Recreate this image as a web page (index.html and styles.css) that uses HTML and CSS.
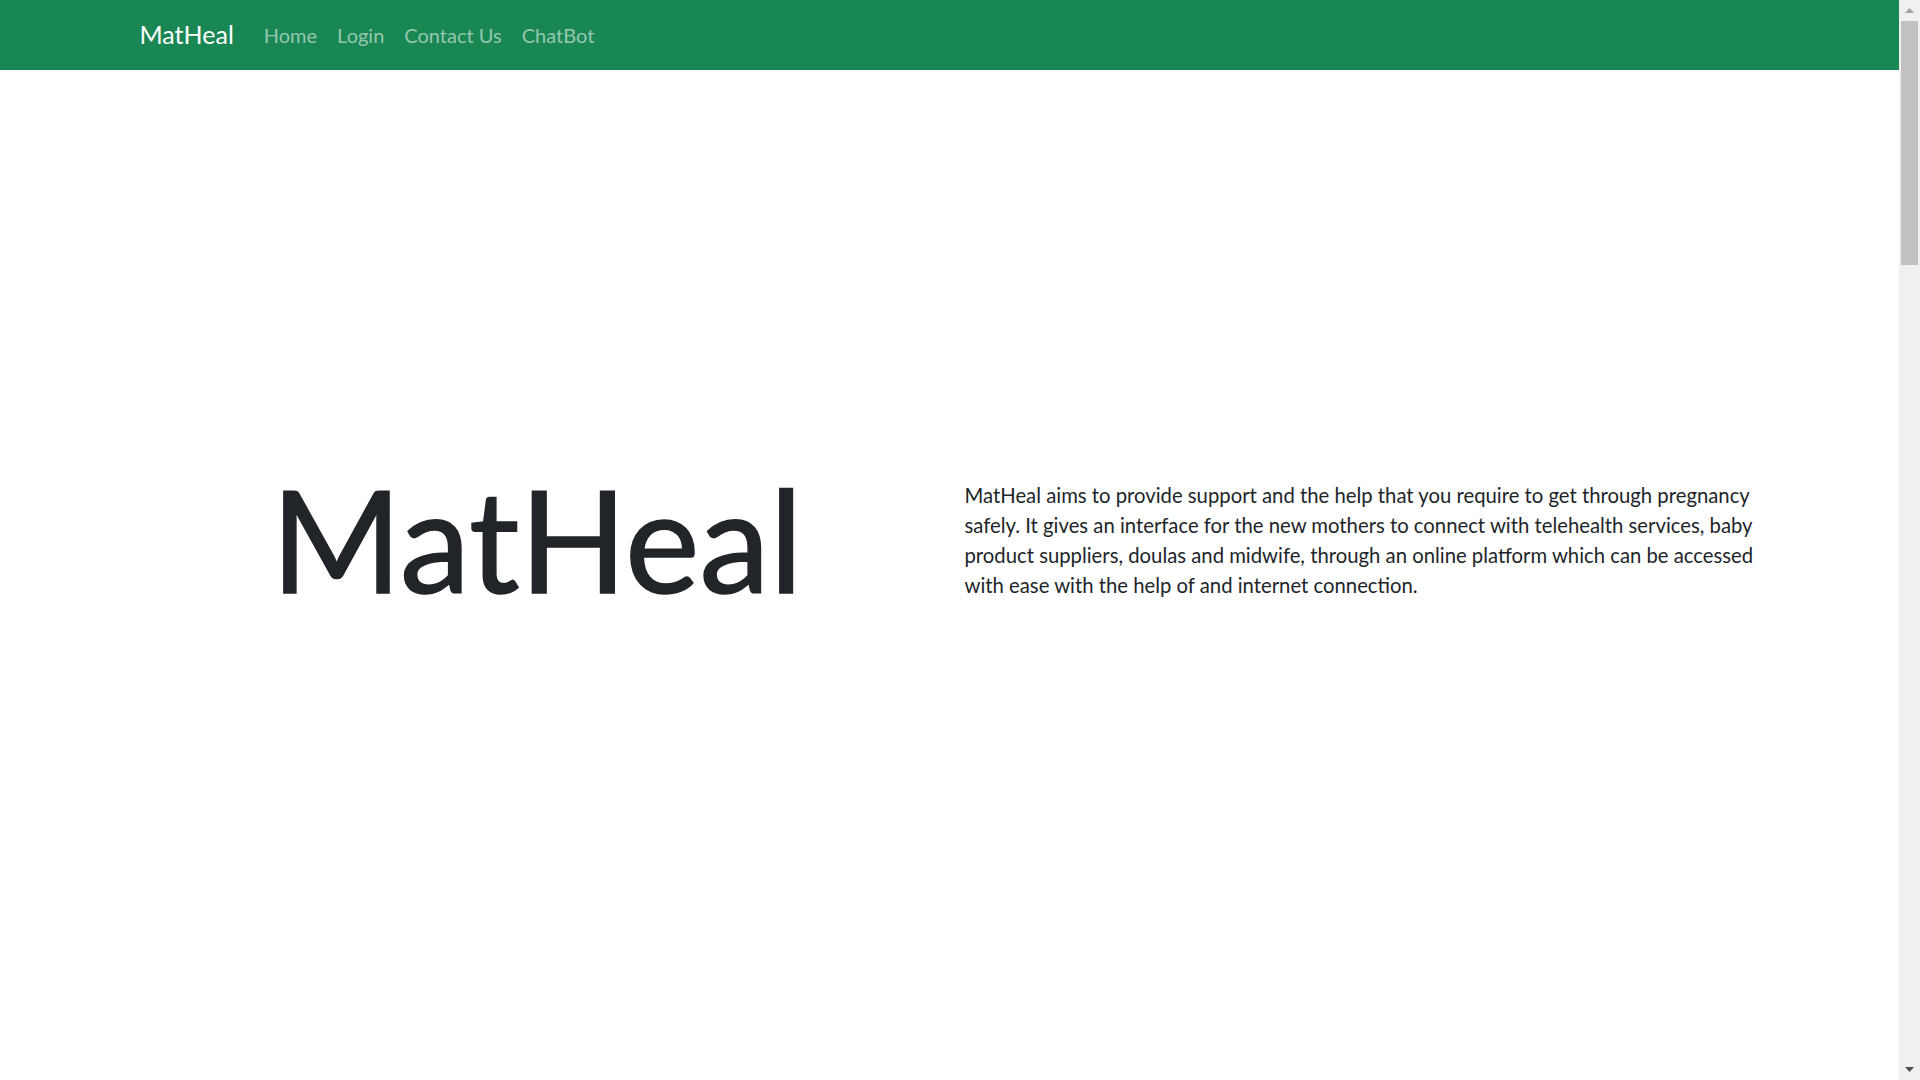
FILE: index.html
```html
<!DOCTYPE html>
<html lang="en">
<head>
<meta charset="utf-8">
<title>MatHeal</title>
<link rel="stylesheet" href="styles.css">
</head>
<body>
<div class="viewport">
  <div class="page">
    <nav class="navbar">
      <div class="container nav-inner">
        <a class="brand" href="#">MatHeal</a>
        <ul class="nav">
          <li><a class="nav-link" href="#">Home</a></li>
          <li><a class="nav-link" href="#">Login</a></li>
          <li><a class="nav-link" href="#">Contact Us</a></li>
          <li><a class="nav-link" href="#">ChatBot</a></li>
        </ul>
      </div>
    </nav>
    <main class="hero">
      <div class="container row">
        <div class="col col-title">
          <h1 class="display">MatHeal</h1>
        </div>
        <div class="col col-text">
          <p class="lead">MatHeal aims to provide support and the help that you require to get through pregnancy safely. It gives an interface for the new mothers to connect with telehealth services, baby product suppliers, doulas and midwife, through an online platform which can be accessed with ease with the help of and internet connection.</p>
        </div>
      </div>
    </main>
  </div>
  <div class="scrollbar" aria-hidden="true">
    <div class="sb-btn">
      <svg width="9" height="5" viewBox="0 0 9 5"><polygon points="0,5 4.5,0 9,5" fill="#a3a3a3"/></svg>
    </div>
    <div class="sb-track">
      <div class="sb-thumb"></div>
    </div>
    <div class="sb-btn">
      <svg width="9" height="5" viewBox="0 0 9 5"><polygon points="0,0 9,0 4.5,5" fill="#505050"/></svg>
    </div>
  </div>
</div>
</body>
</html>
```
FILE: styles.css
```css
* { box-sizing: border-box; }
html, body { margin: 0; padding: 0; height: 100%; overflow: hidden; }
body {
  font-family: "Lato", "Noto Sans", "Liberation Sans", sans-serif;
  font-size: 20px;
  line-height: 1.5;
  color: #212529;
  background: #fff;
}
.viewport { display: flex; height: 100vh; }
.page { flex: 1; min-width: 0; overflow: hidden; }

.container { width: 1650px; margin: 0 auto; padding: 0 15px; }

.navbar { background: #198754; padding: 10px 0; }
.nav-inner { display: flex; align-items: center; }
.brand {
  font-size: 25px;
  line-height: 37.5px;
  padding: 6.25px 0;
  margin-right: 20px;
  color: #fff;
  text-decoration: none;
  white-space: nowrap;
}
.nav { display: flex; list-style: none; margin: 0; padding: 0; }
.nav-link {
  display: block;
  padding: 10px;
  line-height: 30px;
  font-size: 20px;
  color: rgba(255, 255, 255, 0.55);
  text-decoration: none;
}

.hero { padding-top: 384px; }
.row { display: flex; padding: 0; }
.col { flex: 1 1 0; padding: 0 15px; }
.col-title { text-align: center; }
.display {
  margin: 0 0 10px;
  font-size: 141px;
  font-weight: 400;
  line-height: 1.2;
  letter-spacing: 0;
  -webkit-text-stroke: 1.5px #212529;
}
.col-text { padding-top: 26px; }
.lead {
  margin: 0 0 20px;
  font-size: 20.3px;
  line-height: 30px;
  font-weight: 400;
}

.scrollbar {
  width: 21px;
  flex: 0 0 21px;
  background: #f0f0f0;
  display: flex;
  flex-direction: column;
}
.sb-btn {
  height: 21px;
  flex: 0 0 21px;
  display: flex;
  align-items: center;
  justify-content: center;
}
.sb-btn svg { display: block; }
.sb-track { flex: 1; padding: 0 2px; }
.sb-thumb { height: 244px; background: #c1c1c1; }
```
